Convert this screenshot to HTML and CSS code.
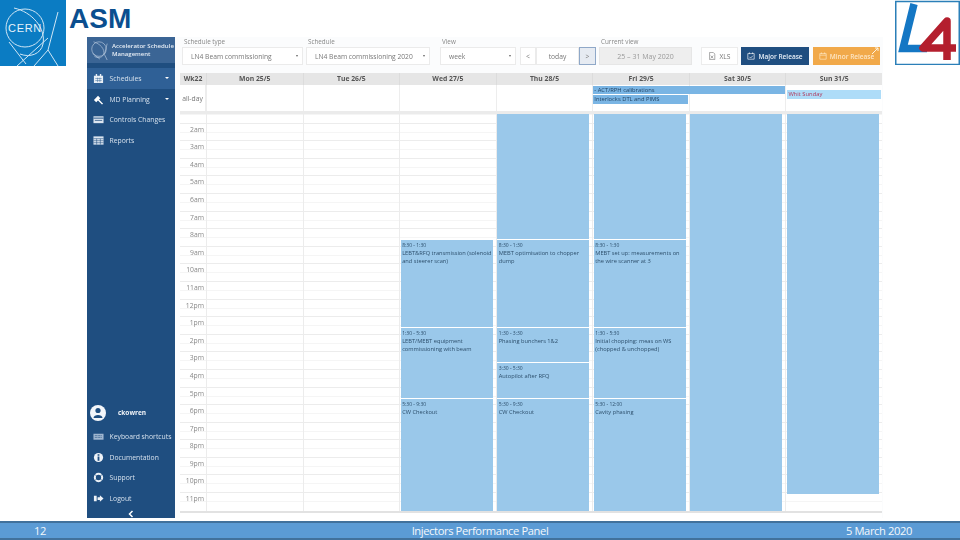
FILE: index.html
```html
<!DOCTYPE html>
<html lang="en">
<head>
<meta charset="utf-8">
<title>ASM</title>
<link rel="stylesheet" href="styles.css">
</head>
<body>
<div class="slide">
  <div class="slide-body">
    <svg class="cern-logo" viewBox="0 0 66 66">
      <rect width="66" height="66" fill="#0b7cc3"/>
      <g fill="none" stroke="#cfe6f5" stroke-width="1">
        <circle cx="25" cy="28" r="19"/>
        <path d="M14 8 C32 12 46 28 43 44 C41 54 30 58 20 54"/>
        <path d="M9 42 L26 64 M58 12 L48 50 L58 66 M17 66 L48 38 M34 66 L48 50"/>
      </g>
      <text x="8" y="32" class="cern-word">CERN</text>
    </svg>
    <h1 class="asm-title">ASM</h1>
    <svg class="l4-logo" viewBox="0 0 65 65">
      <rect x="0.75" y="1.5" width="63.5" height="63" fill="#fff" stroke="#2b7fb8" stroke-width="1.5"/>
      <path d="M19 4 L8 48.500 L32 48.500" fill="none" stroke="#1477c4" stroke-width="7.500"/>
      <path d="M52 60 L52 21 L28 48 L61 48" fill="none" stroke="#b41f2e" stroke-width="7.500" stroke-linejoin="round"/>
    </svg>

    <div class="app">
      <aside class="sidebar">
        <div class="brand">
          <svg class="brand-mark" viewBox="0 0 22 22"><g fill="none" stroke="#b9cbe0" stroke-width=".7"><circle cx="11" cy="10" r="8"/><path d="M5 2C12 4 18 10 16 16 14 20 9 20 6 18M4 15 12 21M20 4 17 16 20 22"/></g></svg>
          <div class="brand-text"><span>Accelerator Schedule</span><span class="brand-sub">Management</span></div>
        </div>
        <nav class="nav">
          <a class="nav-item is-active">
            <svg class="nav-icon" viewBox="0 0 12 12"><path d="M1 3h10v8H1z M3 1h1.5v3H3z M7.5 1H9v3H7.5z" fill="#e8eef5"/><path d="M2.5 6h7M2.5 8.2h7M5 5v5M7.5 5v5" stroke="#2f6096" stroke-width=".5"/></svg>
            <span class="nav-label">Schedules</span><span class="caret"></span>
          </a>
          <a class="nav-item">
            <svg class="nav-icon" viewBox="0 0 12 12"><path d="M1 6.5 5.5 2 8 4.5 6.6 6 11 10.5 9.8 11.5 5.4 7.2 3.5 9z" fill="#fff"/></svg>
            <span class="nav-label">MD Planning</span><span class="caret"></span>
          </a>
          <a class="nav-item">
            <svg class="nav-icon" viewBox="0 0 12 12"><path d="M.5 2.5h11v7.500H.5z" fill="#dbe5f0"/><path d="M.5 4.500h11" stroke="#1f4e80" stroke-width="1"/><path d="M2 7h8" stroke="#1f4e80" stroke-width=".8"/></svg>
            <span class="nav-label">Controls Changes</span>
          </a>
          <a class="nav-item">
            <svg class="nav-icon" viewBox="0 0 12 12"><path d="M.5 1.500h11v9H.5z" fill="#dbe5f0"/><path d="M.5 4h11M.5 6.200h11M.5 8.400h11M4 4v6.500M8 4v6.500" stroke="#1f4e80" stroke-width=".6"/></svg>
            <span class="nav-label">Reports</span>
          </a>
        </nav>
        <div class="user-row">
          <span class="avatar"><svg viewBox="0 0 16 16"><circle cx="8" cy="5.500" r="2.600" fill="#1f4e80"/><path d="M3.500 13c0-4 9-4 9 0z" fill="#1f4e80"/></svg></span>
          <span class="user-name">ckowren</span>
        </div>
        <nav class="nav">
          <a class="nav-item">
            <svg class="nav-icon" viewBox="0 0 12 12"><path d="M.5 3h11v6.500H.5z" fill="#9fb6d0"/><path d="M2 5h8M2 7h8" stroke="#1f4e80" stroke-width=".8" stroke-dasharray="1 .6"/></svg>
            <span class="nav-label">Keyboard shortcuts</span>
          </a>
          <a class="nav-item">
            <svg class="nav-icon" viewBox="0 0 12 12"><circle cx="6" cy="6" r="5" fill="#eef3f8"/><path d="M5 2.500h2v1.500H5zM5 5h2v4.500H5z" fill="#1f4e80"/></svg>
            <span class="nav-label">Documentation</span>
          </a>
          <a class="nav-item">
            <svg class="nav-icon" viewBox="0 0 12 12"><circle cx="6" cy="6" r="4" fill="none" stroke="#eef3f8" stroke-width="2.200"/><path d="M2 2.500 4 4.500M10 2.500 8 4.500M2 9.500 4 7.500M10 9.500 8 7.500" stroke="#1f4e80" stroke-width=".8"/></svg>
            <span class="nav-label">Support</span>
          </a>
          <a class="nav-item">
            <svg class="nav-icon" viewBox="0 0 12 12"><path d="M1 3h3v6H1zM5 4.500h2.500V2.500L11.500 6 7.500 9.500V7.500H5z" fill="#eef3f8"/></svg>
            <span class="nav-label">Logout</span>
          </a>
        </nav>
        <div class="collapse"><svg viewBox="0 0 8 8"><path d="M5.500 1 2.500 4l3 3" fill="none" stroke="#fff" stroke-width="1.500"/></svg></div>
      </aside>

      <main class="main">
        <div class="toolbar">
          <div class="field field-type">
            <label class="field-label">Schedule type</label>
            <div class="select"><span>LN4 Beam commissioning</span><i class="arrow"></i></div>
          </div>
          <div class="field field-schedule">
            <label class="field-label">Schedule</label>
            <div class="select"><span>LN4 Beam commissioning 2020</span><i class="arrow"></i></div>
          </div>
          <div class="field field-view">
            <label class="field-label">View</label>
            <div class="select"><span>week</span><i class="arrow"></i></div>
          </div>
          <div class="pager">
            <span class="page-btn page-prev">&lt;</span>
            <span class="page-btn page-today">today</span>
            <span class="page-btn page-next">&gt;</span>
          </div>
          <div class="field field-current">
            <label class="field-label">Current view</label>
            <div class="range">25 &ndash; 31 May 2020</div>
          </div>
          <span class="btn btn-xls">
            <svg class="btn-icon" viewBox="0 0 10 10"><path d="M2 .5h4.500L8.500 2.500v7H2z" fill="#fff" stroke="#666" stroke-width=".7"/><path d="M3.500 4.500 6.500 8M6.500 4.500 3.500 8" stroke="#666" stroke-width=".7"/></svg>
            XLS
          </span>
          <span class="btn btn-major">
            <svg class="btn-icon" viewBox="0 0 10 10"><path d="M1 2h8v7H1zM3 .5v2M7 .5v2M3 6l1.500 1.500L7.500 4.500" fill="none" stroke="#fff" stroke-width=".8"/></svg>
            Major Release
          </span>
          <span class="btn btn-minor">
            <svg class="btn-icon" viewBox="0 0 10 10"><path d="M1 2h8v7H1zM3 .5v2M7 .5v2M1 4h8" fill="none" stroke="#ffe9c8" stroke-width=".8"/></svg>
            Minor Release
            <svg class="minor-mark" viewBox="0 0 8 8"><path d="M1 7 7 1M4 1h3v3" fill="none" stroke="#fff3df" stroke-width="1"/></svg>
          </span>
        </div>

        <div class="calendar">
          <div class="cal-head">
            <div class="head-cell">Wk22</div>
            <div class="head-cell">Mon 25/5</div>
            <div class="head-cell">Tue 26/5</div>
            <div class="head-cell">Wed 27/5</div>
            <div class="head-cell">Thu 28/5</div>
            <div class="head-cell">Fri 29/5</div>
            <div class="head-cell">Sat 30/5</div>
            <div class="head-cell">Sun 31/5</div>
          </div>
          <div class="allday">
            <div class="allday-label">all-day</div>
            <div class="allday-day d1"></div><div class="allday-day d2"></div><div class="allday-day d3"></div><div class="allday-day d4"></div><div class="allday-day d5"></div><div class="allday-day d6"></div><div class="allday-day d7"></div>
            <div class="allday-event ev-rph">- ACT/RPH calibrations</div>
            <div class="allday-event ev-interlocks">Interlocks DTL and PIMS</div>
            <div class="allday-event ev-sunday">Whit Sunday</div>
          </div>
          <div class="allday-rule"></div>
          <div class="timegrid">
            <div class="rows">
              <div class="hour"><span class="hour-label">1am</span></div><div class="hour"><span class="hour-label">2am</span></div><div class="hour"><span class="hour-label">3am</span></div><div class="hour"><span class="hour-label">4am</span></div><div class="hour"><span class="hour-label">5am</span></div><div class="hour"><span class="hour-label">6am</span></div><div class="hour"><span class="hour-label">7am</span></div><div class="hour"><span class="hour-label">8am</span></div><div class="hour"><span class="hour-label">9am</span></div><div class="hour"><span class="hour-label">10am</span></div><div class="hour"><span class="hour-label">11am</span></div><div class="hour"><span class="hour-label">12pm</span></div><div class="hour"><span class="hour-label">1pm</span></div><div class="hour"><span class="hour-label">2pm</span></div><div class="hour"><span class="hour-label">3pm</span></div><div class="hour"><span class="hour-label">4pm</span></div><div class="hour"><span class="hour-label">5pm</span></div><div class="hour"><span class="hour-label">6pm</span></div><div class="hour"><span class="hour-label">7pm</span></div><div class="hour"><span class="hour-label">8pm</span></div><div class="hour"><span class="hour-label">9pm</span></div><div class="hour"><span class="hour-label">10pm</span></div><div class="hour"><span class="hour-label">11pm</span></div>
            </div>
            <div class="day-columns">
              <div class="axis-spacer"></div>
              <div class="day"></div>
              <div class="day"></div>
              <div class="day">
                <div class="gap-top"></div>
                <div class="event h-a"><span class="time">8:30 - 1:30</span><span>LEBT&amp;RFQ transmission (solenoid and steerer scan)</span></div>
                <div class="event h-b"><span class="time">1:30 - 5:30</span><span>LEBT/MEBT equipment commissioning with beam</span></div>
                <div class="event h-c"><span class="time">5:30 - 9:30</span><span>CW Checkout</span></div>
              </div>
              <div class="day">
                <div class="event h-early"></div>
                <div class="event h-a"><span class="time">8:30 - 1:30</span><span>MEBT optimisation to chopper dump</span></div>
                <div class="event h-b1"><span class="time">1:30 - 3:30</span><span>Phasing bunchers 1&amp;2</span></div>
                <div class="event h-b2"><span class="time">3:30 - 5:30</span><span>Autopilot after RFQ</span></div>
                <div class="event h-c"><span class="time">5:30 - 9:30</span><span>CW Checkout</span></div>
              </div>
              <div class="day">
                <div class="event h-early"></div>
                <div class="event h-a"><span class="time">8:30 - 1:30</span><span>MEBT set up: measurements on the wire scanner at 3</span></div>
                <div class="event h-b"><span class="time">1:30 - 5:30</span><span>Initial chopping: meas on WS (chopped &amp; unchopped)</span></div>
                <div class="event h-c"><span class="time">5:30 - 12:00</span><span>Cavity phasing</span></div>
              </div>
              <div class="day"><div class="event h-full"></div></div>
              <div class="day"><div class="event h-sun"></div></div>
            </div>
          </div>
          <div class="cal-foot"></div>
        </div>
      </main>
    </div>
  </div>

  <footer class="footer">
    <span class="foot-num">12</span>
    <span class="foot-title">Injectors Performance Panel</span>
    <span class="foot-date">5 March 2020</span>
  </footer>
</div>
</body>
</html>
```

FILE: styles.css
```css
* { box-sizing: border-box; }
html, body { margin: 0; padding: 0; background: #fff; }
body { width: 960px; height: 540px; overflow: hidden; font-family: "Open Sans", "Liberation Sans", sans-serif; }

.slide { width: 960px; height: 540px; display: flex; flex-direction: column; }
.slide-body {
  display: grid;
  grid-template-columns: 66px 21px 796px 12px 65px;
  grid-template-rows: 37px 29px 452px;
  height: 521px;
}
.cern-logo { grid-column: 1; grid-row: 1 / 3; width: 66px; height: 66px; display: block; }
.cern-word { font: 400 11px "Liberation Sans", sans-serif; fill: #e6f2fa; letter-spacing: .7px; }
.asm-title {
  grid-column: 2 / 4; grid-row: 1; margin: 0 0 0 3px;
  font: 700 28px/37px "Liberation Sans", sans-serif; color: #0b4f8f;
}
.l4-logo { grid-column: 5; grid-row: 1 / 3; width: 65px; height: 65px; display: block; }

.app {
  grid-column: 3; grid-row: 2 / 4;
  display: flex; height: 481px; filter: blur(.45px);
}

.sidebar {
  width: 88px; flex: none; background: #1f4e80; color: #d5e0ec;
  display: flex; flex-direction: column; font-size: 6.8px;
}
.brand { height: 26px; background: #3b6595; display: flex; align-items: center; padding-left: 2px; gap: 3px; margin-bottom: 5px; }
.brand-mark { width: 20px; height: 22px; flex: none; }
.brand-text { display: flex; flex-direction: column; font-weight: 600; line-height: 9.500px; white-space: nowrap; color: #e6edf5; font-size: 6.100px; }
.brand-sub { font-size: 6px; }
.nav { display: flex; flex-direction: column; }
.nav-item { height: 20.800px; display: flex; align-items: center; padding-left: 5.500px; gap: 6px; white-space: nowrap; }
.nav-item.is-active { background: #2f6096; }
.nav-icon { width: 11px; height: 11px; flex: none; }
.nav-label { flex: 1; }
.caret { width: 0; height: 0; border-left: 2px solid transparent; border-right: 2px solid transparent; border-top: 2.500px solid #fff; margin-right: 6px; }
.user-row { margin-top: auto; display: flex; align-items: center; height: 26px; padding-left: 3px; gap: 12px; font-weight: 700; font-size: 6.500px; color: #f2f5f9; }
.avatar { width: 16px; height: 16px; border-radius: 50%; background: #f3f6fa; display: block; }
.avatar svg { display: block; width: 16px; height: 16px; }
.collapse { height: 9px; display: flex; justify-content: center; align-items: flex-end; }
.collapse svg { width: 8px; height: 8px; }

.main { flex: 1; min-width: 0; background: #fbfcfd; padding: 0 1px 0 5px; display: flex; flex-direction: column; }

.toolbar { height: 36px; display: flex; align-items: flex-end; padding: 0 0 8px 2px; font-size: 6.700px; color: #777; }
.field { display: flex; flex-direction: column; }
.field-label { font-size: 6.300px; line-height: 10px; color: #888; padding-left: 2px; }
.field-type { width: 121px; margin-right: 3px; }
.field-schedule { width: 124px; margin-right: 10px; }
.field-view { width: 76px; margin-right: 4px; }
.field-current { width: 93px; margin-left: 3px; margin-right: 9px; }
.select { height: 18px; background: #fff; border: 1px solid #ebebeb; display: flex; align-items: center; justify-content: space-between; padding: 0 4px 0 8px; white-space: nowrap; }
.arrow { width: 0; height: 0; border-left: 1.500px solid transparent; border-right: 1.500px solid transparent; border-top: 2.500px solid #666; }
.pager { display: flex; height: 18px; }
.page-btn { background: #fff; border: 1px solid #ebebeb; display: flex; align-items: center; justify-content: center; }
.page-prev { width: 16px; }
.page-today { width: 43px; }
.page-next { width: 17px; border: 1px solid #8fa8c8; background: #e6ebf2; }
.range { height: 18px; background: #eeeeee; border: 1px solid #e6e6e6; display: flex; align-items: center; justify-content: center; color: #999; white-space: nowrap; font-size: 7px; }
.btn { height: 18px; display: flex; align-items: center; justify-content: center; gap: 3px; white-space: nowrap; position: relative; }
.btn-icon { width: 8px; height: 8px; flex: none; }
.btn-xls { width: 37px; background: #fff; border: 1px solid #ececec; margin-right: 3px; }
.btn-major { width: 68px; background: #1f4e80; color: #e8eff7; font-weight: 600; margin-right: 4px; font-size: 6.500px; }
.btn-minor { width: 67px; background: #f1a94a; color: #fde6c6; font-weight: 600; font-size: 6.500px; }
.minor-mark { position: absolute; top: 0; right: 1px; width: 8px; height: 8px; }

.calendar { flex: 1; min-height: 0; display: flex; flex-direction: column; background: #fff; }
.cal-head, .allday, .day-columns { display: grid; grid-template-columns: 26px repeat(7, 1fr); }
.cal-head { height: 12px; background: #e6e6e6; font-size: 6.800px; font-weight: 700; color: #555; }
.head-cell { text-align: center; line-height: 12px; white-space: nowrap; }
.head-cell + .head-cell { border-left: 1px solid #dcdcdc; }
.allday { height: 26px; grid-template-rows: 9.500px 9.500px 7px; font-size: 5.800px; }
.allday-label { grid-column: 1; grid-row: 1 / 4; border-right: 1px solid #ededed; color: #777; display: flex; align-items: center; justify-content: center; font-size: 6.800px; }
.allday-day { grid-row: 1 / 4; border-left: 1px solid #ededed; }
.d1 { grid-column: 2; } .d2 { grid-column: 3; } .d3 { grid-column: 4; } .d4 { grid-column: 5; } .d5 { grid-column: 6; } .d6 { grid-column: 7; } .d7 { grid-column: 8; }
.allday-event { line-height: 9px; padding-left: 1px; white-space: nowrap; overflow: hidden; min-width: 0; color: #1e3f5f; }
.ev-rph { grid-column: 6 / 8; grid-row: 1; background: #7ab5e4; margin: .5px 0 .5px 1px; }
.ev-interlocks { grid-column: 6; grid-row: 2; background: #7ab5e4; margin: 0 1px 0 1px; line-height: 9.500px; }
.ev-sunday { grid-column: 8; grid-row: 1 / 3; background: #aedcf8; color: #b0385c; margin: 5px 1px 0 2px; height: 9px; }
.allday-rule { height: 3px; background: #ebebeb; }

.timegrid { flex: 1; min-height: 0; position: relative; overflow: hidden; }
.rows { margin-top: -9px; }
.hour {
  height: 17.600px; font-size: 6.800px; line-height: 14px; color: #888;
  background: linear-gradient(#ececec 0 1px, transparent 1px 8.800px, #f5f5f5 8.800px 9.800px, transparent 9.800px);
}
.hour-label { display: block; width: 24px; text-align: right; }
.day-columns { position: absolute; inset: 0; }
.day { border-left: 1px solid #ececec; display: flex; flex-direction: column; padding: 0 3px 0 .5px; gap: 1px; min-width: 0; }
.gap-top { height: 125px; flex: none; }
.event { background: #9ac8ea; color: #2d4f6c; font-size: 5.700px; line-height: 8px; padding: 1px 1px 0 1.500px; display: flex; flex-direction: column; flex: none; overflow: hidden; }
.time { font-size: 5px; line-height: 8px; }
.h-early { height: 125px; }
.h-a { height: 87px; }
.h-b { height: 70px; }
.h-b1 { height: 34px; }
.h-b2 { height: 35px; }
.h-c { height: 112px; }
.h-full { height: 398px; }
.h-sun { height: 380px; }

.cal-foot { height: 7px; border-top: 2px solid #e2e2e2; }

.footer {
  height: 19px; background: #5b9bd5; border-top: 2px solid #41719c; border-bottom: 2px solid #41719c;
  display: grid; grid-template-columns: 320px 320px 320px; align-items: center; color: #f4f8fc;
  font: 400 11.200px/15px "Open Sans", "Liberation Sans", sans-serif; letter-spacing: -.4px;
}
.foot-num { padding-left: 34px; }
.foot-title { text-align: center; }
.foot-date { text-align: right; padding-right: 48px; }
```
